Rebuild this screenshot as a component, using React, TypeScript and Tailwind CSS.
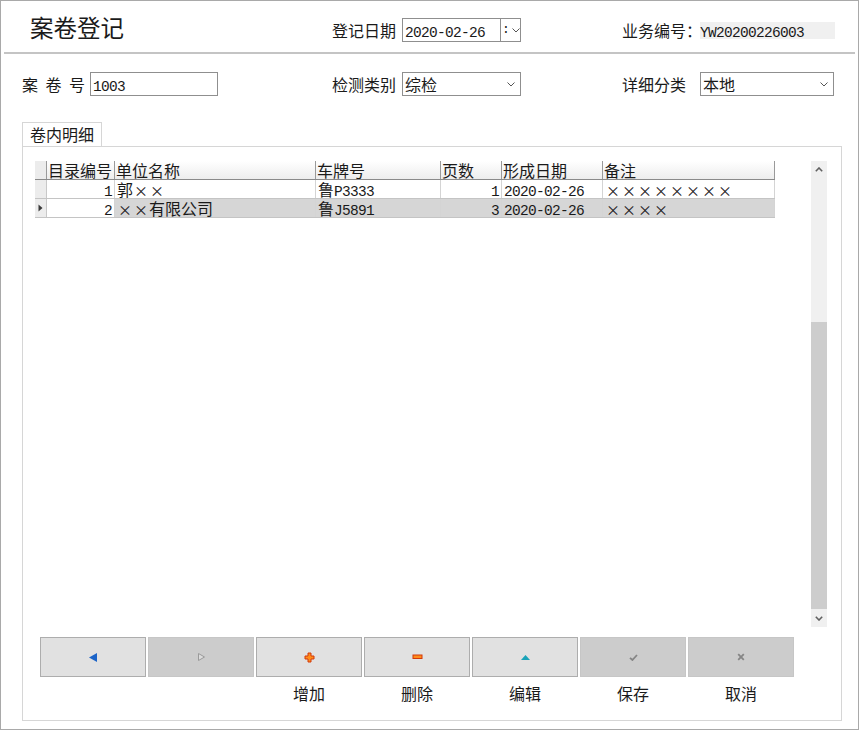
import React from "react";

// Splits a string into CJK runs (16px sans), ASCII runs (monospace) and full-width crosses.
function Txt({ t }: { t: string }) {
  const parts = t.match(/×|[\x20-\x7e]+|[^\x20-\x7e×]+/g) ?? [];
  return (
    <>
      {parts.map((p, i) =>
        p === "×" ? (
          <span key={i} className="inline-block w-[16px] text-center text-[14px]">
            ×
          </span>
        ) : /^[\x20-\x7e]+$/.test(p) ? (
          <span key={i} className="font-['Liberation_Mono',monospace] text-[14.5px] tracking-[-0.7px]">
            {p}
          </span>
        ) : (
          <span key={i} className="text-[16px]">
            {p}
          </span>
        )
      )}
    </>
  );
}

function ChevronDown({ color = "#555555" }: { color?: string }) {
  return (
    <svg width="8" height="5" viewBox="0 0 8 5">
      <path d="M0.5 0.5 L4 4 L7.5 0.5" fill="none" stroke={color} strokeWidth="1" />
    </svg>
  );
}

function ScrollChevron({ up }: { up?: boolean }) {
  return (
    <svg width="8" height="5" viewBox="0 0 8 5">
      <path
        d={up ? "M0.8 4.2 L4 1 L7.2 4.2" : "M0.8 0.8 L4 4 L7.2 0.8"}
        fill="none"
        stroke="#606060"
        strokeWidth="1.6"
      />
    </svg>
  );
}

function Select({ value, width }: { value: string; width: string }) {
  return (
    <div
      className={`${width} h-[24px] border border-[#8f8f8f] bg-white flex items-center pl-[2px] pr-[5px] justify-between`}
    >
      <span className="leading-[20px]">
        <Txt t={value} />
      </span>
      <ChevronDown />
    </div>
  );
}

const colW = ["w-[68px]", "w-[201px]", "w-[125px]", "w-[61px]", "w-[101px]", "w-[172px]"];
const headers = ["目录编号", "单位名称", "车牌号", "页数", "形成日期", "备注"];
const alignRight = [true, false, false, true, false, false];
const rows = [
  ["1", "郭××", "鲁P3333", "1", "2020-02-26", "××××××××"],
  ["2", "××有限公司", "鲁J5891", "3", "2020-02-26", "××××"],
];

function Grid() {
  return (
    <div className="flex ml-[12px] mt-[14px]">
      <div className="w-[776px] h-[466px] bg-white">
        {/* column headers */}
        <div className="flex h-[19px] border-b border-[#8a8a8a] w-[740px] bg-linear-to-b from-white to-[#ededed]">
          <div className="w-[12px] h-full bg-[#ececec] border-r border-[#9a9a9a]" />
          {headers.map((h, i) => (
            <div
              key={h}
              className={`${colW[i]} h-full border-r border-[#9a9a9a] pl-[1px] leading-[18px] whitespace-nowrap`}
            >
              <Txt t={h} />
            </div>
          ))}
        </div>
        {rows.map((r, ri) => (
          <div key={ri} className="flex h-[19px] border-b border-[#c4c4c4] w-[740px]">
            <div className="w-[12px] h-full bg-[#ececec] border-r border-[#c8c8c8] flex items-center justify-center">
              {ri === 1 && (
                <svg width="5" height="8" viewBox="0 0 5 8">
                  <path d="M0.5 0.5 L4.5 4 L0.5 7.5 Z" fill="#3a3a3a" />
                </svg>
              )}
            </div>
            {r.map((c, ci) => (
              <div
                key={ci}
                className={`${colW[ci]} h-full border-r border-[#d4d4d4] leading-[18px] whitespace-nowrap ${
                  alignRight[ci] ? "text-right pr-[2px]" : "pl-[2px]"
                } ${ri === 1 && ci > 0 ? "bg-[#d6d6d6]" : "bg-white"}`}
              >
                <Txt t={c} />
              </div>
            ))}
          </div>
        ))}
      </div>
      {/* vertical scrollbar */}
      <div className="w-[16px] h-[466px] bg-[#f0f0f0] flex flex-col">
        <div className="h-[17px] flex items-center justify-center">
          <ScrollChevron up />
        </div>
        <div className="h-[144px]" />
        <div className="h-[287px] bg-[#cdcdcd]" />
        <div className="h-[18px] flex items-center justify-center">
          <ScrollChevron />
        </div>
      </div>
    </div>
  );
}

const IconPrev = () => (
  <svg width="10" height="11" viewBox="0 0 10 11">
    <path d="M9 1 L1 5.5 L9 10 Z" fill="#1c64c8" />
  </svg>
);
const IconNext = () => (
  <svg width="9" height="10" viewBox="0 0 9 10">
    <path d="M1.5 1.5 L7.5 5 L1.5 8.5 Z" fill="#dcdcdc" stroke="#9a9a9a" strokeWidth="1" />
  </svg>
);
const IconPlus = () => (
  <svg width="11" height="11" viewBox="0 0 11 11">
    <path
      d="M4 1 H7 V4 H10 V7 H7 V10 H4 V7 H1 V4 H4 Z"
      fill="#ff8c1a"
      stroke="#d2380a"
      strokeWidth="1"
    />
  </svg>
);
const IconMinus = () => (
  <svg width="11" height="6" viewBox="0 0 11 6">
    <rect x="1" y="1" width="9" height="3.5" fill="#ff8c1a" stroke="#d2380a" strokeWidth="1" />
  </svg>
);
const IconUp = () => (
  <svg width="11" height="7" viewBox="0 0 11 7">
    <path d="M1 6 L5.5 1 L10 6 Z" fill="#1aa3b8" />
  </svg>
);
const IconCheck = () => (
  <svg width="9" height="7" viewBox="0 0 9 7">
    <path d="M1 3.8 L3.4 6 L8 1" fill="none" stroke="#858585" strokeWidth="1.8" />
  </svg>
);
const IconClose = () => (
  <svg width="8" height="8" viewBox="0 0 8 8">
    <path d="M1.2 1.2 L6.8 6.8 M6.8 1.2 L1.2 6.8" fill="none" stroke="#858585" strokeWidth="1.8" />
  </svg>
);

const buttons: { icon: React.ReactNode; enabled: boolean; label: string }[] = [
  { icon: <IconPrev />, enabled: true, label: "" },
  { icon: <IconNext />, enabled: false, label: "" },
  { icon: <IconPlus />, enabled: true, label: "增加" },
  { icon: <IconMinus />, enabled: true, label: "删除" },
  { icon: <IconUp />, enabled: true, label: "编辑" },
  { icon: <IconCheck />, enabled: false, label: "保存" },
  { icon: <IconClose />, enabled: false, label: "取消" },
];

export default function App() {
  return (
    <div className="w-[859px] h-[730px] border border-[#a9a9a9] bg-white text-[#1a1a1a] font-['Noto_Sans_CJK_SC','Noto_Sans',sans-serif] text-[16px]">
      {/* title bar */}
      <div className="flex items-start h-[51px] pl-[29px]">
        <div className="w-[302px] mt-[10px] leading-[32px] text-[23.5px]">案卷登记</div>
        <div className="flex items-center mt-[17px] h-[24px]">
          <div className="w-[70px] leading-[20px]">登记日期</div>
          <div className="w-[119px] h-[24px] border border-[#8f8f8f] bg-white flex">
            <div className="w-[97px] pl-[2px] leading-[22px]">
              <Txt t="2020-02-26" />
            </div>
            <div className="flex-1 border-l border-[#8f8f8f] flex items-center pl-[1px] gap-[2px]">
              <span className="font-['Liberation_Mono',monospace] text-[13px] leading-[20px]">:</span>
              <ChevronDown />
            </div>
          </div>
          <div className="w-[101px]" />
          <div className="w-[78px] leading-[20px] whitespace-nowrap">业务编号：</div>
          <div className="w-[135px] h-[17px] bg-[#f0f0f0] leading-[17px] whitespace-nowrap">
            <Txt t="YW20200226003" />
          </div>
        </div>
      </div>
      <div className="mx-[3px] h-[2px] bg-[#c4c4c4]" />

      {/* form fields */}
      <div className="flex items-center pl-[21px] mt-[18px] h-[24px]">
        <div className="w-[63px] flex justify-between leading-[20px]">
          <span>案</span>
          <span>卷</span>
          <span>号</span>
        </div>
        <div className="ml-[5px] w-[128px] h-[24px] border border-[#8f8f8f] bg-white pl-[2px] leading-[22px]">
          <Txt t="1003" />
        </div>
        <div className="w-[114px]" />
        <div className="w-[70px] leading-[20px]">检测类别</div>
        <Select value="综检" width="w-[119px]" />
        <div className="w-[101px]" />
        <div className="w-[78px] leading-[20px]">详细分类</div>
        <Select value="本地" width="w-[134px]" />
      </div>

      {/* tab page */}
      <div className="ml-[21px] mt-[26px] w-[820px]">
        <div className="w-[80px] h-[24px] border-t border-l border-r border-[#d6d6d6] pl-[7px] leading-[23px] bg-white">
          卷内明细
        </div>
        <div className="h-[575px] border border-[#d6d6d6] bg-white">
          <Grid />
          <div className="flex gap-[2px] ml-[17px] mt-[10px]">
            {buttons.map((b, i) => (
              <div
                key={i}
                className={`w-[106px] h-[40px] border flex items-center justify-center ${
                  b.enabled ? "bg-[#e1e1e1] border-[#adadad]" : "bg-[#cccccc] border-[#c6c6c6]"
                }`}
              >
                {b.icon}
              </div>
            ))}
          </div>
          <div className="flex gap-[2px] ml-[17px] mt-[7px]">
            {buttons.map((b, i) => (
              <div key={i} className="w-[106px] h-[18px] text-center leading-[18px]">
                {b.label}
              </div>
            ))}
          </div>
        </div>
      </div>
    </div>
  );
}
